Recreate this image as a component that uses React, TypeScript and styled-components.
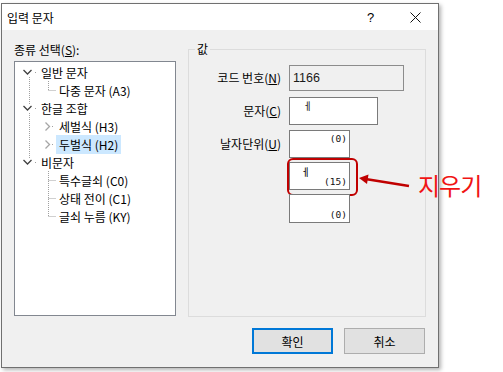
import styled, { createGlobalStyle } from 'styled-components';

const GlobalStyle = createGlobalStyle`
  html, body {
    margin: 0;
    background: #fff;
  }
  body {
    font-family: "Noto Sans CJK KR", "Noto Sans", sans-serif;
    font-size: 12px;
    color: #000;
  }
`;

const Page = styled.div`
  position: relative;
  width: 503px;
  height: 372px;
  overflow: hidden;
  padding: 3px 0 0 1px;
  box-sizing: border-box;
`;

const Window = styled.div`
  width: 438px;
  box-sizing: border-box;
  border: 1px solid #707070;
  background: #f0f0f0;
  box-shadow: 2px 2px 4px rgba(0, 0, 0, 0.3);
`;

const TitleBar = styled.div`
  height: 26px;
  background: #fff;
  display: flex;
  align-items: center;
  padding-left: 5px;
`;

const Title = styled.div`
  flex: 1;
  font-size: 12px;
`;

const CaptionButton = styled.div`
  width: 45px;
  height: 26px;
  display: flex;
  align-items: center;
  justify-content: center;
  font-family: "Liberation Sans", sans-serif;
  font-size: 13px;
`;

const Body = styled.div`
  display: grid;
  grid-template-columns: 162px 238px;
  column-gap: 12px;
  padding: 11px 12px 13px 12px;
  height: 337px;
  box-sizing: border-box;
`;

const LeftColumn = styled.div`
  padding-top: 1px;
`;

const SectionLabel = styled.div`
  line-height: 16px;
  height: 16px;
  margin-bottom: 3px;
`;

const Tree = styled.div`
  height: 255px;
  box-sizing: border-box;
  border: 1px solid #828790;
  background: #fff;
  padding-top: 1px;
`;

const TreeRow = styled.div`
  height: 18px;
  display: flex;
  align-items: center;
`;

const TreeLabel = styled.span<{ $selected?: boolean }>`
  padding: 0 3px;
  line-height: 19px;
  white-space: nowrap;
  background: ${(p) => (p.$selected ? '#cce8ff' : 'transparent')};
`;

const GroupBox = styled.fieldset`
  margin: 0;
  padding: 0;
  border: 1px solid #dcdcdc;
  height: 276px;
  box-sizing: border-box;
  min-width: 0;
`;

const Legend = styled.legend`
  margin-left: 6px;
  padding: 0 2px;
  line-height: 16px;
  font-size: 12px;
`;

const Fields = styled.div`
  padding-top: 8px;
`;

const FieldRow = styled.div<{ $top?: number; $align?: string }>`
  display: flex;
  align-items: ${(p) => p.$align || 'center'};
  margin-top: ${(p) => p.$top || 0}px;
`;

const FieldLabel = styled.div<{ $line?: number }>`
  width: 92px;
  flex-shrink: 0;
  margin-right: 8px;
  text-align: right;
  white-space: nowrap;
  line-height: ${(p) => p.$line || 16}px;
`;

const TextBox = styled.div<{ $w: number; $h: number; $disabled?: boolean }>`
  width: ${(p) => p.$w}px;
  height: ${(p) => p.$h}px;
  box-sizing: border-box;
  border: 1px solid ${(p) => (p.$disabled ? '#8c8c8c' : '#7a7a7a')};
  background: ${(p) => (p.$disabled ? '#f0f0f0' : '#fff')};
  padding: 0 0 0 3px;
  line-height: 24px;
  font-family: "Liberation Sans", "Noto Sans CJK KR", sans-serif;
  font-size: 12.5px;
  color: #1a1a1a;
`;

const Jamo = styled.div<{ $left: number; $top: number }>`
  margin: ${(p) => p.$top}px 0 0 ${(p) => p.$left}px;
  font-family: "Noto Sans CJK KR", sans-serif;
  font-size: 10px;
  line-height: 10px;
  height: 10px;
`;

const UnitStack = styled.div`
  display: flex;
  flex-direction: column;
  gap: 4px;
  width: 61px;
`;

const UnitBox = styled.div<{ $h: number; $justify: string; $bottom?: number }>`
  position: relative;
  height: ${(p) => p.$h}px;
  box-sizing: border-box;
  border: 1px solid #7a7a7a;
  background: #fff;
  display: flex;
  flex-direction: column;
  justify-content: ${(p) => p.$justify};
  padding: 3px 2px ${(p) => p.$bottom ?? 2}px 0;
`;

const Count = styled.div`
  align-self: flex-end;
  font-family: "DejaVu Sans Mono", monospace;
  font-size: 9.5px;
  line-height: 10px;
  color: #111;
`;

const Ring = styled.div`
  position: absolute;
  left: -3px;
  top: -5px;
  width: 71px;
  height: 38px;
  box-sizing: border-box;
  border: 2.5px solid #c00000;
  border-radius: 6px;
`;

const Arrow = styled.svg`
  position: absolute;
  left: 65px;
  top: 8px;
  overflow: visible;
`;

const Note = styled.div`
  position: absolute;
  left: 128px;
  top: 8px;
  font-size: 24px;
  line-height: 28px;
  color: #f01414;
  white-space: nowrap;
  letter-spacing: -1px;
`;

const ButtonRow = styled.div`
  grid-column: 1 / -1;
  display: flex;
  justify-content: flex-end;
  gap: 11px;
  margin-top: 11px;
  padding-right: 1px;
`;

const Button = styled.div<{ $default?: boolean }>`
  width: 81px;
  height: 26px;
  box-sizing: border-box;
  border: ${(p) => (p.$default ? '2px solid #0078d7' : '1px solid #adadad')};
  background: #e1e1e1;
  display: flex;
  align-items: center;
  justify-content: center;
`;

type Node = {
  label: string;
  level: 0 | 1;
  kind: 'open' | 'closed' | 'leaf';
  first?: boolean;
  last?: boolean;
  parentLast?: boolean;
  selected?: boolean;
};

const nodes: Node[] = [
  { label: '일반 문자', level: 0, kind: 'open', first: true },
  { label: '다중 문자 (A3)', level: 1, kind: 'leaf', last: true },
  { label: '한글 조합', level: 0, kind: 'open' },
  { label: '세벌식 (H3)', level: 1, kind: 'closed' },
  { label: '두벌식 (H2)', level: 1, kind: 'closed', last: true, selected: true },
  { label: '비문자', level: 0, kind: 'open', last: true },
  { label: '특수글쇠 (C0)', level: 1, kind: 'leaf', parentLast: true },
  { label: '상태 전이 (C1)', level: 1, kind: 'leaf', parentLast: true },
  { label: '글쇠 누름 (KY)', level: 1, kind: 'leaf', last: true, parentLast: true },
];

const dots = { stroke: '#a0a0a0', strokeWidth: 1, strokeDasharray: '1 1' };

// dotted tree lines and expander glyphs, local x = page x - 15
const Guide = ({ n }: { n: Node }) => {
  if (n.level === 0) {
    return (
      <svg width="23" height="18">
        {!n.first && <line x1="14.5" y1="0" x2="14.5" y2="5" {...dots} />}
        {!n.last && <line x1="14.5" y1="14" x2="14.5" y2="18" {...dots} />}
        <polyline points="8.5,7 12.5,11 16.5,7" fill="none" stroke="#404040" strokeWidth="1.3" />
        <rect x="20" y="9" width="1" height="1" fill="#a0a0a0" />
      </svg>
    );
  }
  return (
    <svg width="41" height="18">
      {!n.parentLast && <line x1="14.5" y1="0" x2="14.5" y2="18" {...dots} />}
      {n.kind === 'leaf' ? (
        <>
          <line x1="33.5" y1="0" x2="33.5" y2={n.last ? 9 : 18} {...dots} />
          <line x1="33.5" y1="9.5" x2="42" y2="9.5" {...dots} />
        </>
      ) : (
        <>
          <polyline points="30.5,5.5 34.5,9.5 30.5,13.5" fill="none" stroke="#a6a6a6" strokeWidth="1.3" />
          <rect x="37" y="9" width="1" height="1" fill="#a0a0a0" />
        </>
      )}
    </svg>
  );
};

const JAMO = 'ㅔ';

export default function App() {
  return (
    <Page>
      <GlobalStyle />
      <Window>
        <TitleBar>
          <Title>입력 문자</Title>
          <CaptionButton>?</CaptionButton>
          <CaptionButton>
            <svg width="11" height="11" viewBox="0 0 11 11">
              <path d="M0.5 0.5 L10.5 10.5 M10.5 0.5 L0.5 10.5" stroke="#111" strokeWidth="1" />
            </svg>
          </CaptionButton>
        </TitleBar>
        <Body>
          <LeftColumn>
            <SectionLabel>
              종류 선택(<u>S</u>):
            </SectionLabel>
            <Tree>
              {nodes.map((n) => (
                <TreeRow key={n.label}>
                  <Guide n={n} />
                  <TreeLabel $selected={n.selected}>{n.label}</TreeLabel>
                </TreeRow>
              ))}
            </Tree>
          </LeftColumn>
          <GroupBox>
            <Legend>값</Legend>
            <Fields>
              <FieldRow>
                <FieldLabel>
                  코드 번호(<u>N</u>)
                </FieldLabel>
                <TextBox $w={115} $h={26} $disabled>
                  1166
                </TextBox>
              </FieldRow>
              <FieldRow $top={6}>
                <FieldLabel>
                  문자(<u>C</u>)
                </FieldLabel>
                <TextBox $w={89} $h={28}>
                  <Jamo $left={10} $top={3}>{JAMO}</Jamo>
                </TextBox>
              </FieldRow>
              <FieldRow $top={5} $align="flex-start">
                <FieldLabel $line={28}>
                  날자단위(<u>U</u>)
                </FieldLabel>
                <UnitStack>
                  <UnitBox $h={28} $justify="flex-start">
                    <Count>(0)</Count>
                  </UnitBox>
                  <UnitBox $h={28} $justify="space-between" $bottom={6}>
                    <Jamo $left={11} $top={1}>{JAMO}</Jamo>
                    <Count>(15)</Count>
                    <Ring />
                    <Arrow width="58" height="22">
                      <line x1="12" y1="8.3" x2="54" y2="15" stroke="#c00000" strokeWidth="2.5" />
                      <polygon points="4,7 13.5,3.5 12,13" fill="#c00000" />
                    </Arrow>
                    <Note>지우기</Note>
                  </UnitBox>
                  <UnitBox $h={29} $justify="flex-end">
                    <Count>(0)</Count>
                  </UnitBox>
                </UnitStack>
              </FieldRow>
            </Fields>
          </GroupBox>
          <ButtonRow>
            <Button $default>확인</Button>
            <Button>취소</Button>
          </ButtonRow>
        </Body>
      </Window>
    </Page>
  );
}
